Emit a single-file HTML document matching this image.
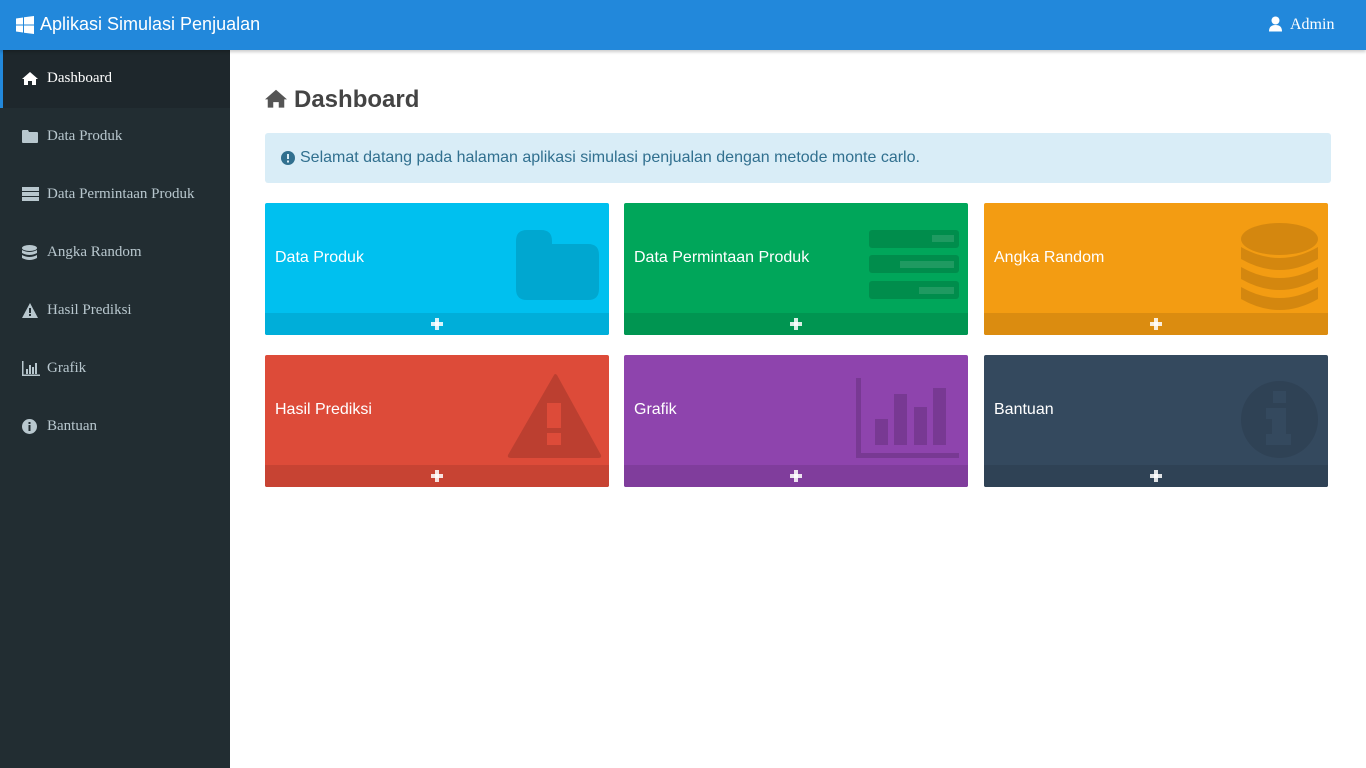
<!DOCTYPE html>
<html><head><meta charset="utf-8"><style>
*{box-sizing:border-box;margin:0;padding:0}
body{width:1366px;height:768px;overflow:hidden;font-family:"Liberation Sans",Arial,sans-serif;background:#fff;position:relative}
.nav{position:absolute;left:0;top:0;width:1366px;height:50px;background:#2288db;box-shadow:0 2px 3px rgba(0,0,0,.2);z-index:2}
.brand{position:absolute;left:40px;top:14px;color:#fff;font-size:18px}
.admin{position:absolute;left:1290px;top:16px;color:#fff;font-family:"Liberation Serif",serif;font-size:16px}
.side{position:absolute;left:0;top:50px;width:230px;height:718px;background:#222d32}
.item{height:58px;position:relative;color:#b8c7ce;font-family:"Liberation Serif",serif;font-size:15px}
.item span{position:absolute;left:47px;top:20px}
.item svg{position:absolute;left:22px;top:21px}
.item.act{background:#1e272c;border-left:3px solid #2288db;color:#fff}
.item.act span{left:44px}.item.act svg{left:19px}
h1{position:absolute;left:294px;top:86px;font-size:24px;color:#444;font-weight:bold}
.alert{position:absolute;left:265px;top:133px;width:1066px;height:50px;background:#d9edf7;border-radius:3px;color:#31708f;font-size:16px;padding:16px 0 0 35px}
.card{position:absolute;width:344px;height:132px;border-radius:2px;overflow:hidden;color:#fff}
.card .t{position:absolute;left:10px;top:46px;font-size:16px}
.card svg.ic{position:absolute;left:0;top:0}
.card .f{position:absolute;left:0;bottom:0;width:100%;height:22px;text-align:center}
.card .f:before,.card .f:after{content:"";position:absolute;background:rgba(255,255,255,.85);left:50%}
.card .f:before{width:12px;height:4px;margin-left:-6px;top:9px}
.card .f:after{width:4px;height:12px;margin-left:-2px;top:5px}
</style></head><body>
<div class="nav">
<svg style="position:absolute;left:16px;top:16px" width="18" height="18" viewBox="0 0 18 18" fill="#fff"><path d="M0 2.5L7 1.5V8.5H0Z M8 1.3L18 0V8.5H8Z M0 9.5H7V16.5L0 15.5Z M8 9.5H18V18L8 16.7Z"/></svg>
<div class="brand">Aplikasi Simulasi Penjualan</div>
<svg style="position:absolute;left:1269px;top:16px" width="13" height="16" viewBox="0 0 13 16" fill="#fff"><circle cx="6.5" cy="4.5" r="4"/><path d="M0 15.5Q0 9 6.5 9Q13 9 13 15.5Z"/></svg>
<div class="admin">Admin</div>
</div>
<div class="side">
<div class="item act"><svg width="16" height="14" viewBox="0 0 16 14" fill="#fff"><path d="M8 1L0 8h2v6h4v-4h4v4h4V8h2z"/></svg><span>Dashboard</span></div>
<div class="item"><svg width="16" height="14" viewBox="0 0 16 14" fill="#b8c7ce"><path d="M0 2q0-1 1-1h5l1 2h8q1 0 1 1v9q0 1-1 1H1q-1 0-1-1z"/></svg><span>Data Produk</span></div>
<div class="item"><svg width="17" height="14" viewBox="0 0 17 14" fill="#b8c7ce"><rect y="0" width="17" height="4"/><rect y="5" width="17" height="4"/><rect y="10" width="17" height="4"/></svg><span>Data Permintaan Produk</span></div>
<div class="item"><svg width="15" height="16" viewBox="0 0 15 16" fill="#b8c7ce"><ellipse cx="7.5" cy="3" rx="7.5" ry="3"/><path d="M0 5q7.5 4 15 0v3q-7.5 4-15 0zM0 10q7.5 4 15 0v3q-7.5 4-15 0z"/></svg><span>Angka Random</span></div>
<div class="item"><svg width="16" height="15" viewBox="0 0 16 15" fill="#b8c7ce"><path d="M8 0L16 15H0z"/><rect x="7" y="5" width="2" height="5" fill="#222d32"/><rect x="7" y="11" width="2" height="2" fill="#222d32"/></svg><span>Hasil Prediksi</span></div>
<div class="item"><svg width="18" height="15" viewBox="0 0 18 15" fill="#b8c7ce"><path d="M0 0h1.5v13.5H18V15H0z"/><rect x="4" y="8" width="2" height="5"/><rect x="7" y="4" width="2" height="9"/><rect x="10" y="6" width="2" height="7"/><rect x="13" y="2" width="2" height="11"/></svg><span>Grafik</span></div>
<div class="item"><svg width="15" height="15" viewBox="0 0 15 15"><circle cx="7.5" cy="7.5" r="7.5" fill="#b8c7ce"/><rect x="6.5" y="3" width="2" height="2" fill="#222d32"/><rect x="6.5" y="6" width="2" height="6" fill="#222d32"/></svg><span>Bantuan</span></div>
</div>
<svg style="position:absolute;left:265px;top:88px" width="22" height="20" viewBox="0 0 16 14" fill="#555"><path d="M8 1L0 8h2v6h4v-4h4v4h4V8h2z"/></svg>
<h1>Dashboard</h1>
<div class="alert"><svg style="position:absolute;left:16px;top:18px" width="14" height="14" viewBox="0 0 14 14"><circle cx="7" cy="7" r="7" fill="#31708f"/><rect x="6" y="3" width="2" height="5" fill="#d9edf7"/><rect x="6" y="9.5" width="2" height="2" fill="#d9edf7"/></svg>Selamat datang pada halaman aplikasi simulasi penjualan dengan metode monte carlo.</div>

<div class="card" style="left:265px;top:203px;background:#00c0ef">
<svg class="ic" width="344" height="132" fill="rgba(0,0,0,.13)"><path d="M251 38q0-11 11-11h14q11 0 11 11v3h36q11 0 11 11v34q0 11-11 11h-61q-11 0-11-11z"/></svg>
<div class="t">Data Produk</div><div class="f" style="background:#00aed9"></div></div>

<div class="card" style="left:624px;top:203px;background:#00a65a">
<svg class="ic" width="344" height="132"><g fill="rgba(0,0,0,.15)"><rect x="245" y="27" width="90" height="18" rx="3"/><rect x="245" y="52" width="90" height="18" rx="3"/><rect x="245" y="78" width="90" height="18" rx="3"/></g><g fill="rgba(255,255,255,.12)"><rect x="308" y="32" width="22" height="7"/><rect x="276" y="58" width="54" height="7"/><rect x="295" y="84" width="35" height="7"/></g></svg>
<div class="t">Data Permintaan Produk</div><div class="f" style="background:#009551"></div></div>

<div class="card" style="left:984px;top:203px;background:#f39c12">
<svg class="ic" width="344" height="132" fill="#d4870f"><ellipse cx="295.5" cy="36" rx="38.5" ry="16"/><path d="M257 44q38.5 22 77 0v12q-38.5 22-77 0z"/><path d="M257 64q38.5 22 77 0v12q-38.5 22-77 0z"/><path d="M257 84q38.5 22 77 0v12q-38.5 22-77 0z"/></svg>
<div class="t">Angka Random</div><div class="f" style="background:#db8c10"></div></div>

<div class="card" style="left:265px;top:355px;background:#dd4b39">
<svg class="ic" width="344" height="132"><path d="M289 20q1-2 3 0l44 80q1 3-3 3h-87q-4 0-3-3z" fill="rgba(0,0,0,.15)"/><rect x="282" y="48" width="14" height="25" fill="#dd4b39"/><rect x="282" y="78" width="14" height="12" fill="#dd4b39"/></svg>
<div class="t">Hasil Prediksi</div><div class="f" style="background:#c74333"></div></div>

<div class="card" style="left:624px;top:355px;background:#8e44ad">
<svg class="ic" width="344" height="132" fill="rgba(0,0,0,.15)"><path d="M232 23h5v75h98v5H232z"/><rect x="251" y="64" width="13" height="26"/><rect x="270" y="39" width="13" height="51"/><rect x="290" y="52" width="13" height="38"/><rect x="309" y="33" width="13" height="57"/></svg>
<div class="t">Grafik</div><div class="f" style="background:#803d9c"></div></div>

<div class="card" style="left:984px;top:355px;background:#34495e">
<svg class="ic" width="344" height="132"><ellipse cx="295.5" cy="64.5" rx="38.5" ry="38.5" fill="#2f4255"/><rect x="289" y="36" width="13" height="12" fill="#34495e"/><path d="M282 53h20v26h5v11h-25v-11h6v-15h-6z" fill="#34495e"/></svg>
<div class="t">Bantuan</div><div class="f" style="background:#2f4255"></div></div>
</body></html>
